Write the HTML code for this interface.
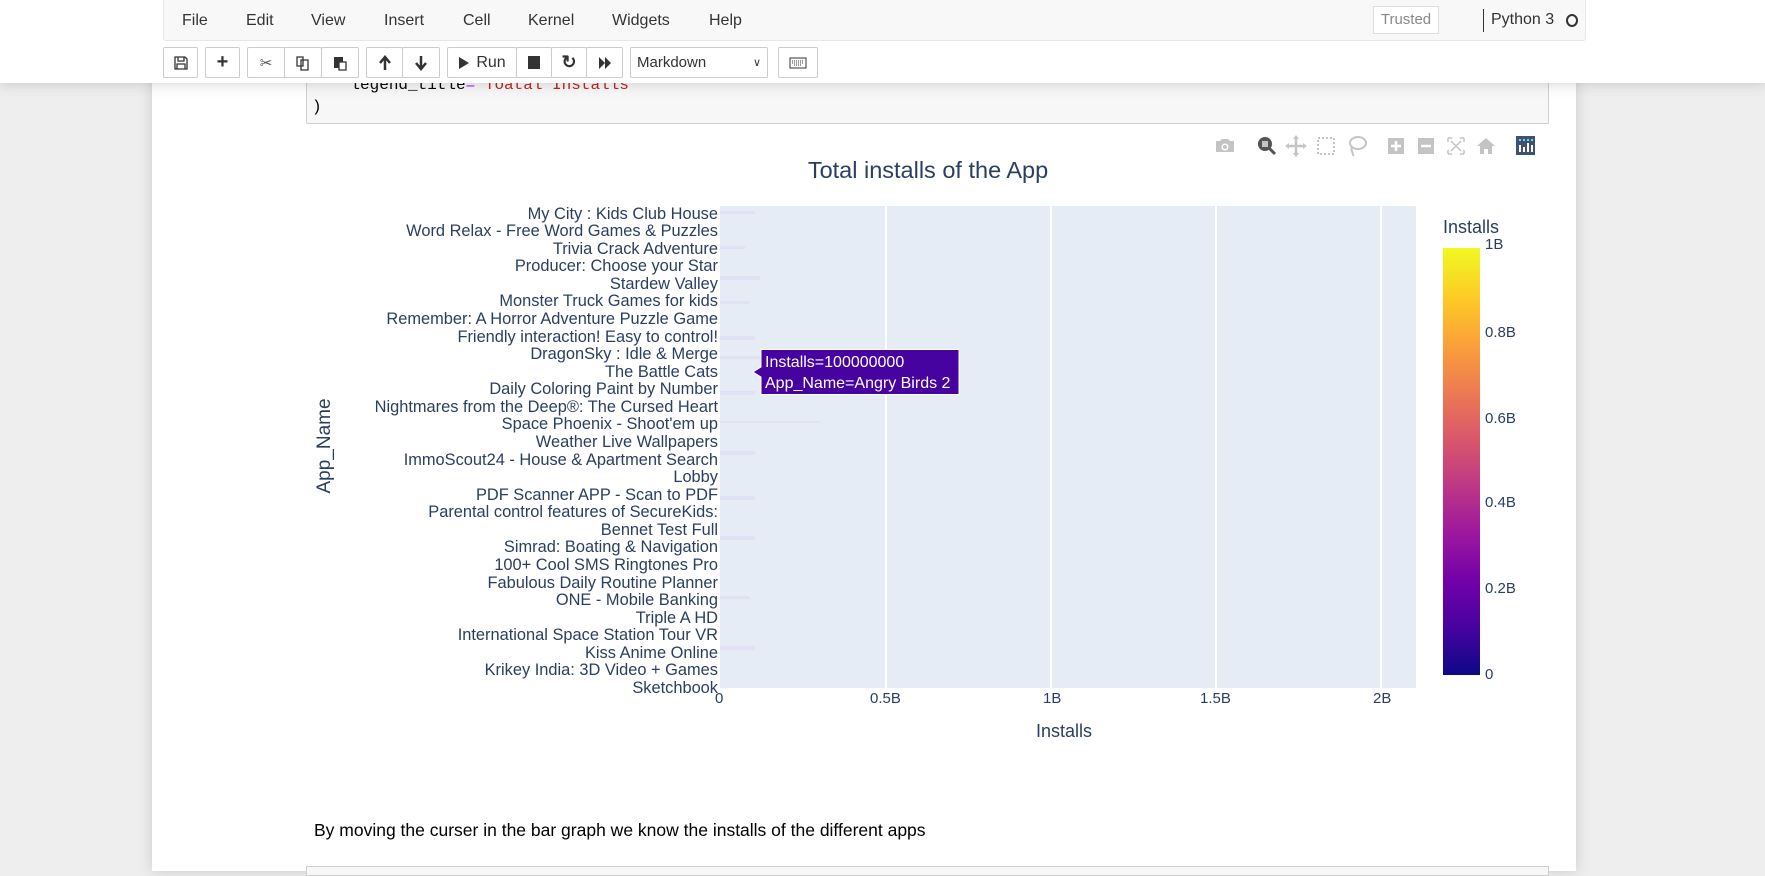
<!DOCTYPE html>
<html><head><meta charset="utf-8"><style>
*{box-sizing:border-box;margin:0;padding:0}
body{width:1765px;height:871px;overflow:hidden;background:#eee;font-family:"Liberation Sans",sans-serif;position:relative}
.abs{position:absolute}
#nb{left:152px;top:0;width:1424px;height:871px;background:#fff;box-shadow:0 0 12px 1px rgba(87,87,87,.2)}
#hdr{left:0;top:0;width:1765px;height:83px;background:#fff;box-shadow:0 0 12px 1px rgba(87,87,87,.25);z-index:5}
#menu{left:163px;top:0;width:1423px;height:41px;background:#f8f8f8;border:1px solid #e7e7e7;border-top:none;border-radius:0 0 3px 3px}
.mi{position:absolute;top:12px;font-size:16px;color:#333}
.btn{position:absolute;top:47px;height:31px;background:#fff;border:1px solid #ccc;border-radius:2px;display:flex;align-items:center;justify-content:center;font-size:16px;color:#333}
.tk{position:absolute;font-size:15px;color:#2a3f5f;white-space:nowrap}
.yl{position:absolute;right:1047px;font-size:16.4px;color:#2a3f5f;white-space:nowrap;line-height:18px}
</style></head><body>
<div id="nb" class="abs"></div>
<div class="abs" style="left:306px;top:60px;width:1243px;height:64px;background:#f7f7f7;border:1px solid #cfcfcf;border-radius:2px"></div>
<div class="abs" style="left:312px;top:74px;font-family:'Liberation Mono',monospace;font-size:16px;line-height:22px;color:#000;white-space:pre">    legend_title<span style="color:#aa22ff">=</span><span style="color:#ba2121">'Toatal Installs'</span>
)</div>

<div id="hdr" class="abs">
 <div id="menu" class="abs">
  <span class="mi" style="left:18px">File</span><span class="mi" style="left:82px">Edit</span><span class="mi" style="left:147px">View</span><span class="mi" style="left:220px">Insert</span><span class="mi" style="left:299px">Cell</span><span class="mi" style="left:364px">Kernel</span><span class="mi" style="left:448px">Widgets</span><span class="mi" style="left:545px">Help</span>
  <span class="abs" style="left:1209px;top:6px;width:66px;height:28px;border:1px solid #ddd;background:#fff;color:#888;font-size:15px;line-height:26px;text-align:center">Trusted</span>
  <span class="abs" style="left:1319px;top:9px;width:1px;height:23px;background:#333"></span>
  <span class="abs" style="left:1327px;top:11px;font-size:16px;color:#333">Python 3</span>
  <span class="abs" style="left:1402px;top:14px;width:12px;height:13px;border:2px solid #333;border-radius:50%"></span>
 </div>
 <div class="btn" style="left:163px;width:35px"><svg width="14" height="14" viewBox="0 0 14 14"><path d="M1 1h10l2 2v10H1z M4 1v4h6V1 M3 8h8v5H3z" fill="none" stroke="#333" stroke-width="1.3"/></svg></div>
 <div class="btn" style="left:205px;width:35px;font-weight:bold;font-size:20px">+</div>
 <div class="btn" style="left:247px;width:38px;border-radius:2px 0 0 2px;font-size:15px;color:#555">✂</div>
 <div class="btn" style="left:284px;width:38px"><svg width="16" height="16" viewBox="0 0 16 16"><path d="M2 2h6v9H2z M6 5h7v10H6z" fill="#fff" stroke="#333" stroke-width="1.3"/></svg></div>
 <div class="btn" style="left:321px;width:38px"><svg width="16" height="16" viewBox="0 0 16 16"><path d="M2 2h9v11H2z" fill="#333"/><path d="M7 7h7v8H7z" fill="#fff" stroke="#333" stroke-width="1.3"/></svg></div>
 <div class="btn" style="left:366px;width:37px"><svg width="14" height="16"><path d="M7 15V3M2 8l5-6 5 6" fill="none" stroke="#333" stroke-width="2.5"/></svg></div>
 <div class="btn" style="left:402px;width:38px"><svg width="14" height="16"><path d="M7 1v12M2 8l5 6 5-6" fill="none" stroke="#333" stroke-width="2.5"/></svg></div>
 <div class="btn" style="left:447px;width:70px;gap:6px"><svg width="12" height="14"><path d="M1 1l10 6-10 6z" fill="#333"/></svg>Run</div>
 <div class="btn" style="left:516px;width:36px"><span style="width:12px;height:13px;background:#333;display:block"></span></div>
 <div class="btn" style="left:551px;width:36px;font-weight:bold;font-size:18px">↻</div>
 <div class="btn" style="left:586px;width:37px"><svg width="14" height="14"><path d="M1 1l6 6-6 6z M7 1l6 6-6 6z" fill="#333"/></svg></div>
 <div class="btn" style="left:630px;width:138px;justify-content:space-between;padding:0 6px;font-size:15px"><span>Markdown</span><span style="font-size:11px">∨</span></div>
 <div class="btn" style="left:778px;width:40px"><svg width="18" height="12"><rect x="1" y="1" width="16" height="10" fill="none" stroke="#333"/><path d="M3 4h12M3 6h12M5 8h8" stroke="#333" stroke-dasharray="1 1"/></svg></div>
</div>

<svg class="abs" style="left:1210px;top:134px" width="340" height="24" viewBox="1210 134 340 24">
 <g fill="#c4c4c4">
  <path d="M1216 141h4l2-2h6l2 2h4v11h-18z"/><circle cx="1225" cy="147" r="3.5" fill="#fff"/><circle cx="1225" cy="147" r="2"/>
  <circle cx="1265" cy="144" r="7" fill="#555"/><rect x="1262" y="141" width="6" height="6" fill="#c4c4c4"/><path d="M1269 148l6 6" stroke="#555" stroke-width="3"/>
  <path d="M1296 137v18M1287 146h18" stroke="#c4c4c4" stroke-width="2.5"/><path d="M1296 135l3 4h-6zM1296 157l3-4h-6zM1285 146l4-3v6zM1307 146l-4-3v6z"/>
  <rect x="1318" y="138" width="16" height="16" fill="none" stroke="#c4c4c4" stroke-width="2" stroke-dasharray="2 2"/>
  <ellipse cx="1358" cy="143" rx="8" ry="6" fill="none" stroke="#c4c4c4" stroke-width="2"/><path d="M1352 147c-2 4 2 6 1 9" fill="none" stroke="#c4c4c4" stroke-width="2"/>
  <rect x="1388" y="138" width="16" height="16"/><path d="M1396 141v10M1391 146h10" stroke="#fff" stroke-width="2.5"/>
  <rect x="1418" y="138" width="16" height="16"/><path d="M1421 146h10" stroke="#fff" stroke-width="2.5"/>
  <path d="M1448 138h4M1448 138v4M1464 138h-4M1464 138v4M1448 154h4M1448 154v-4M1464 154h-4M1464 154v-4M1451 141l10 10M1461 141l-10 10" stroke="#c4c4c4" stroke-width="1.5" fill="none"/>
  <path d="M1477 146l9-8 9 8h-3v8h-4v-5h-4v5h-4v-8z"/>
 </g>
 <rect x="1516" y="136" width="19" height="19" fill="#3f4f75"/>
 <g fill="#fff"><rect x="1519" y="145" width="2" height="7"/><rect x="1523" y="147" width="2" height="5"/><rect x="1527" y="143" width="2" height="9"/><rect x="1531" y="145" width="2" height="7"/></g>
 <g fill="#6dd"><rect x="1519" y="139" width="2" height="2"/><rect x="1523" y="139" width="2" height="2"/><rect x="1527" y="139" width="2" height="2"/><rect x="1531" y="139" width="2" height="2"/></g>
</svg>

<div class="abs" style="left:728px;top:157px;width:400px;text-align:center;font-size:23.5px;color:#2a3f5f">Total installs of the App</div>

<svg class="abs" style="left:720px;top:206px" width="696" height="482">
 <rect width="696" height="482" fill="#e5ecf6"/>
 <g stroke="#fff" stroke-width="2"><line x1="166" y1="0" x2="166" y2="482"/><line x1="331" y1="0" x2="331" y2="482"/><line x1="496" y1="0" x2="496" y2="482"/><line x1="661" y1="0" x2="661" y2="482"/></g>
 <g fill="#dfe0f3" opacity=".8">
  <rect x="0" y="5" width="35" height="3"/><rect x="0" y="40" width="25" height="3"/><rect x="0" y="70" width="40" height="4"/><rect x="0" y="95" width="30" height="3"/><rect x="0" y="130" width="35" height="4"/><rect x="0" y="150" width="45" height="3"/><rect x="0" y="185" width="35" height="4"/><rect x="0" y="215" width="100" height="2"/><rect x="0" y="245" width="35" height="4"/><rect x="0" y="290" width="35" height="4"/><rect x="0" y="330" width="35" height="4"/><rect x="0" y="390" width="30" height="3"/><rect x="0" y="440" width="35" height="4"/>
 </g>
</svg>
<div class="yl" style="top:205px">My City : Kids Club House</div>
<div class="yl" style="top:222px">Word Relax - Free Word Games &amp; Puzzles</div>
<div class="yl" style="top:240px">Trivia Crack Adventure</div>
<div class="yl" style="top:257px">Producer: Choose your Star</div>
<div class="yl" style="top:275px">Stardew Valley</div>
<div class="yl" style="top:292px">Monster Truck Games for kids</div>
<div class="yl" style="top:310px">Remember: A Horror Adventure Puzzle Game</div>
<div class="yl" style="top:328px">Friendly interaction! Easy to control!</div>
<div class="yl" style="top:345px">DragonSky : Idle &amp; Merge</div>
<div class="yl" style="top:363px">The Battle Cats</div>
<div class="yl" style="top:380px">Daily Coloring Paint by Number</div>
<div class="yl" style="top:398px">Nightmares from the Deep®: The Cursed Heart</div>
<div class="yl" style="top:415px">Space Phoenix - Shoot'em up</div>
<div class="yl" style="top:433px">Weather Live Wallpapers</div>
<div class="yl" style="top:451px">ImmoScout24 - House &amp; Apartment Search</div>
<div class="yl" style="top:468px">Lobby</div>
<div class="yl" style="top:486px">PDF Scanner APP - Scan to PDF</div>
<div class="yl" style="top:503px">Parental control features of SecureKids:</div>
<div class="yl" style="top:521px">Bennet Test Full</div>
<div class="yl" style="top:538px">Simrad: Boating &amp; Navigation</div>
<div class="yl" style="top:556px">100+ Cool SMS Ringtones Pro</div>
<div class="yl" style="top:574px">Fabulous Daily Routine Planner</div>
<div class="yl" style="top:591px">ONE - Mobile Banking</div>
<div class="yl" style="top:609px">Triple A HD</div>
<div class="yl" style="top:626px">International Space Station Tour VR</div>
<div class="yl" style="top:644px">Kiss Anime Online</div>
<div class="yl" style="top:661px">Krikey India: 3D Video + Games</div>
<div class="yl" style="top:679px">Sketchbook</div>
<div class="abs" style="left:325px;top:446px;transform:translate(-50%,-50%) rotate(-90deg);font-size:19px;color:#2a3f5f;white-space:nowrap">App_Name</div>
<div class="tk" style="left:715px;top:690px">0</div>
<div class="tk" style="left:870px;top:690px">0.5B</div>
<div class="tk" style="left:1043px;top:690px">1B</div>
<div class="tk" style="left:1200px;top:690px">1.5B</div>
<div class="tk" style="left:1373px;top:690px">2B</div>
<div class="abs" style="left:1036px;top:721px;font-size:18px;color:#2a3f5f">Installs</div>
<svg class="abs" style="left:752px;top:349px" width="210" height="48"><path d="M9 0.5h198v45H9V28l-8-5 8-5z" fill="#46039f" stroke="#fff"/></svg>
<div class="abs" style="left:765px;top:352px;font-size:16px;line-height:21px;color:#fff;white-space:nowrap">Installs=100000000<br>App_Name=Angry Birds 2</div>
<div class="abs" style="left:1443px;top:217px;font-size:18px;color:#2a3f5f">Installs</div>
<div class="abs" style="left:1443px;top:248px;width:37px;height:427px;background:linear-gradient(to top,#0d0887 0%,#46039f 11%,#7201a8 22%,#9c179e 33%,#bd3786 44%,#d8576b 55%,#ed7953 66%,#fb9f3a 77%,#fdca26 88%,#f0f921 100%)"></div>
<div class="tk" style="left:1485px;top:236px">1B</div>
<div class="tk" style="left:1485px;top:324px">0.8B</div>
<div class="tk" style="left:1485px;top:410px">0.6B</div>
<div class="tk" style="left:1485px;top:494px">0.4B</div>
<div class="tk" style="left:1485px;top:580px">0.2B</div>
<div class="tk" style="left:1485px;top:666px">0</div>

<div class="abs" style="left:314px;top:820px;font-size:17.5px;color:#000">By moving the curser in the bar graph we know the installs of the different apps</div>
<div class="abs" style="left:306px;top:866px;width:1243px;height:10px;background:#f7f7f7;border:1px solid #cfcfcf"></div>
</body></html>
